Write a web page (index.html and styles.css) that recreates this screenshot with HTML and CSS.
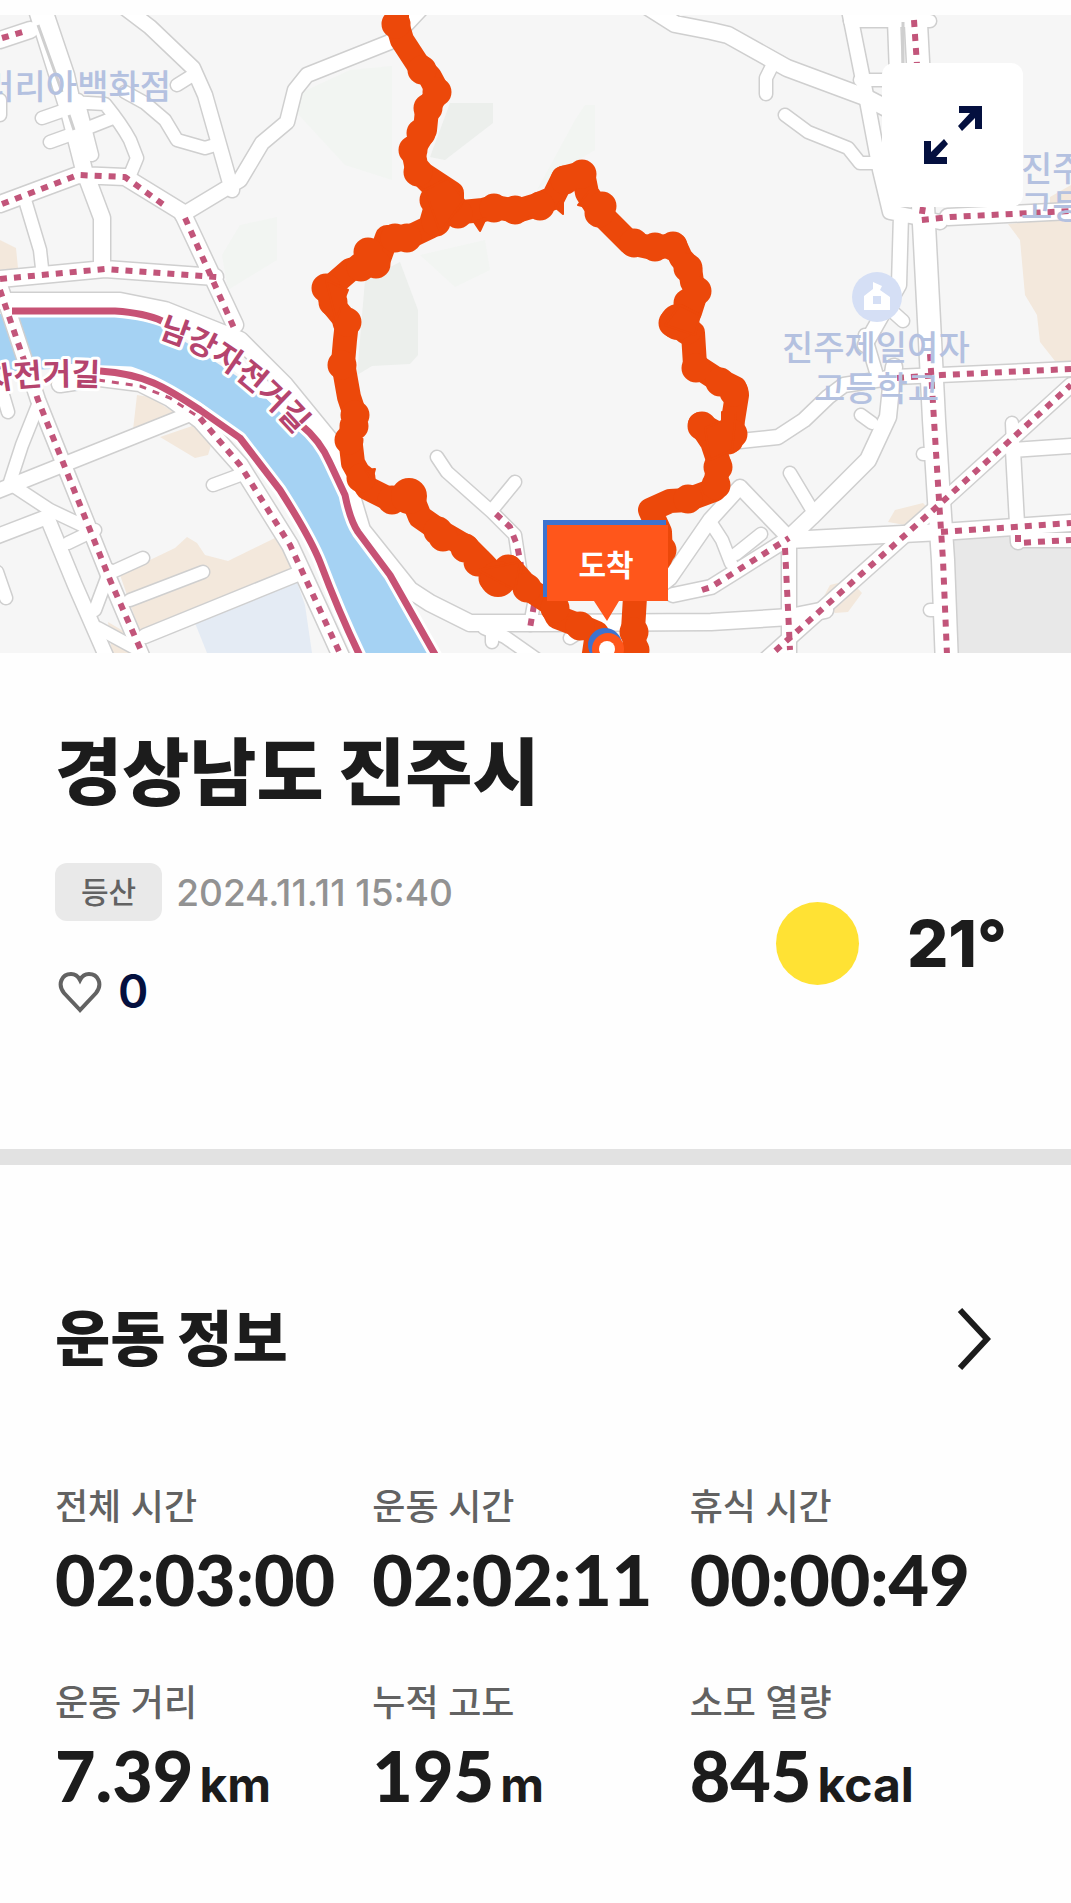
FILE: index.html
```html
<!DOCTYPE html>
<html lang="ko">
<head>
<meta charset="utf-8">
<meta name="viewport" content="width=device-width, initial-scale=1">
<title>경상남도 진주시</title>
<link rel="stylesheet" href="styles.css">
</head>
<body>
<main class="page">
  <section class="map" aria-label="운동 경로 지도">
    <svg class="map-canvas" viewBox="0 15 1071 638" role="img" aria-label="경로 지도">
      <defs>
        <g id="roads">
          <path class="r16" d="M37 10L70 115L84 170L102 218V268M44 10L66 75L80 140M0 40L30 30M0 204L78 175L125 177L182 212L235 325M0 279L105 269L215 277"/>
          <path class="r14" d="M125 8L150 27L193 68L205 95L232 190M182 215L240 180L262 143L287 122L295 90L307 75L390 42L420 10"/>
          <path class="r12" d="M193 75L177 85M70 102L105 104Q122 125 130 140L137 158L130 175M125 92L145 103L165 120L177 140L205 148L215 145M42 118L65 110M50 142L75 133L113 118M78 100L92 155M25 200L40 250L42 268M0 100V115"/>
          <path class="r16" d="M-5 301H120L165 310L240 340L285 385L330 440L350 490L362 530L410 590L430 603L470 623H540L711 622L790 617L825 610"/>
          <path class="r14" d="M0 285L38 400L70 480L110 580L146 665"/>
          <path class="r16" d="M60 384L100 378L140 383L170 398L200 420L240 465L265 505L290 545L320 610L345 665"/>
          <path class="r14" d="M-5 492L15 484L190 414M-5 537L47 517L75 585L110 665M145 636L300 573"/>
          <path class="r12" d="M38 405L22 445L10 482M0 385L8 412M15 487L50 510L88 528M68 543L95 530M95 610L110 570M110 573L143 558M130 600L203 572M213 485L240 475M-3 572L6 598M98 628L135 648"/>
          <path class="r12" d="M437 457L447 472L492 512L515 535L521 575L535 598L530 625M492 510L515 482M484 628L505 637L545 665M492 628V642M570 638L590 625"/>
          <path class="r14" d="M655 590L670 578L710 520L740 487L789 538M673 595L711 587L735 572L789 538L789 665"/>
          <path class="r12" d="M711 523L722 540L731 563M736 554L761 534M811 508L790 473M872 423L861 415M923 454H935M930 610H940M772 66L766 78V94M865 335L876 372M893 312L903 321M1012 423L1013 445M894 367L892 387"/>
          <path class="r16" d="M789 538L811 517L868 460L888 417L891 387L894 367M789 540L941 532L1071 523"/>
          <path class="r14" d="M740 441L778 437L804 420L828 397L844 385L895 377L1071 369M765 660L941 503L1071 385M1013 450L1018 542M1013 450L1071 446M1018 540H1071"/>
          <path class="r16" d="M645 5L675 24L711 31L728 35L787 68L865 97L890 110M948 217L1071 211"/>
          <path class="r12" d="M785 115L808 132L848 148L860 163L882 163M850 21H930M894 20L896 75M860 80H905"/>
          <path class="r14" d="M848 5L865 90L880 170L890 212L940 222M901 215L899 285L865 345"/>
          <path class="r22" d="M915 5L919 80L923 205L930 340L934 420L939 500L943 560L947 665"/>
        </g>
      </defs>
      <rect class="land" y="15" width="1071" height="638"/>
      <path class="wood faint" d="M285 100L350 70L392 66V180L345 165ZM222 255L240 225L277 217V260L228 290ZM537 190L575 120L585 105H595V150L570 165ZM420 255L485 240L490 270L455 287Z"/>
      <path class="wood" d="M430 157L445 160L493 123V103H450ZM365 280L400 262L418 310V355L410 364L372 366L357 375Z"/>
      <path class="sand" d="M0 240L16 248L18 268L0 274ZM137 395L133 430L175 413L150 397ZM160 437L195 458L208 455L212 442L195 425ZM120 575L150 560L175 548L187 537L197 543L205 555L228 561L275 538L293 565L300 575L140 632ZM108 622L130 635V653H112ZM888 522L895 510L923 503L928 508L905 525ZM822 600L830 585L850 580L862 593L848 612L835 613ZM1008 224L1020 240L1025 295L1037 315L1040 342L1055 361H1071V185L1050 197V220Z"/>
      <path class="campus" d="M195 623L297 582L305 605L312 653H207Z"/>
      <path class="block" d="M950 540L1071 533V653H955Z"/>
      <path class="river" d="M0 314H115L160 325L250 385L310 435L345 500L355 530L434 653H362L325 570L290 495L245 437L200 402L150 375L100 366L0 372Z"/>
      <use href="#roads" class="road-edge"/>
      <use href="#roads" class="road-fill"/>
      <path class="lane-gap" d="M38 25L62 92M69 115L74 130M903 22V80"/>
      <path class="bike-halo" d="M12 311H115Q150 314 166 322M166 322C220 345 270 390 300 424Q320 440 330 463L345 495Q350 520 358 532L390 575L437 658M60 370L130 373Q160 383 200 410L240 438L280 490Q310 537 320 562Q340 615 361 658"/>
      <path class="bike" d="M12 311H115Q145 313 162 321M300 424Q320 440 330 463L345 495Q350 520 358 532L390 575L437 658M100 371C145 374 165 387 200 410L240 438L280 490Q310 537 320 562Q340 615 361 658"/>
      <path class="trail-dots" d="M2 38L26 31M2 204L78 175L125 177L168 208M185 218L234 328M0 279L105 269L217 277M0 290L17 340L38 400L70 480L110 580L143 655M496 514L510 527L517 545L521 565M534 605L530 628M702 590L711 587L735 572L789 538M785 548L790 650M897 378L941 375L1071 369M765 660L941 503L1071 385M941 532L1071 523M1018 535V543L1071 540M923 207L921 220L950 217L1071 211M914 20L918 80M930 354L934 420L939 500L943 560L947 655M200 418L240 465L265 505L290 545L320 610L342 658"/>
      <path class="trail-dots thin" d="M98 380L140 386L170 398L200 418"/>

      <circle class="school" cx="877" cy="297" r="25"/>
      <path class="school-glyph" d="M864 296L873 289V282L882 286L880 290L890 297V310H864ZM873 296V304H881V296Z"/>
      <text class="place" x="171" y="99" text-anchor="end">갤러리아백화점</text>
      <text class="place" x="782" y="360">진주제일여자</text>
      <text class="place" x="814" y="401">고등학교</text>
      <text class="place" x="1021" y="181">진주</text>
      <text class="place" x="1021" y="219">고등</text>
      <path id="bank-north" fill="none" d="M158 337C202 351 246 374 314 456"/>
      <path id="bank-south" fill="none" d="M-95 422C-40 390 22 382 100 386"/>
      <text class="path-name"><textPath href="#bank-north">남강자전거길</textPath></text>
      <text class="path-name" text-anchor="end"><textPath href="#bank-south" startOffset="100%">남강자전거길</textPath></text>

      <g class="route">
        <path d="M397 10V23L402 40L417 63L430 77L438 92L433 100L427 110L425 130L413 150L417 170L440 193L434 213L430 227L407 238L387 237L378 262L350 270L327 290L333 305L347 322L345 340L343 363L349 397L355 415L350 437L353 463L367 488L393 501L410 492L420 517L443 533L467 547L483 563L497 578L510 567L530 590L550 603L557 617L583 627L597 633L593 660"/>
        <path d="M417 170L452 193V213L483 210L495 207L517 211L537 205L553 198L563 178L583 173L587 193L600 213L617 230L630 243L653 248L675 245L681 258L690 268L692 282L697 290L690 312L673 325L693 333L695 365L715 378L735 388L737 395L733 420L731 441L700 424L712 442L719 463L714 490L687 500L670 501L650 510L660 532L661 557L635 597L633 630L637 660"/>
        <path class="route-wide" d="M396 24h0M422 70h0M437 92h0M428 108h0M421 133h0M413 150h0M418 172h0M434 200h0M448 196h0M436 222h0M407 238h0M395 238h0M376 264h0M368 252h0M361 267h0M326 288h0M333 302h0M347 322h0M342 365h0M355 415h0M354 426h0M349 440h0M361 478h0M392 500h0M409 495h0M438 531h0M443 537h0M465 548h0M478 562h0M493 578h0M497 577h0M508 569h0M527 588h0M555 608h0M580 626h0M458 214h0M494 208h0M515 210h0M540 206h0M565 180h0M582 174h0M599 213h0M602 206h0M634 243h0M655 247h0M673 246h0M688 268h0M697 291h0M688 303h0M673 323h0M687 330h0M696 368h0M720 382h0M734 392h0M733 434h0M702 426h0M728 440h0M718 467h0M716 485h0M688 499h0M662 550h0M634 632h0M635 650h0"/>
        <path class="route-big" d="M409 496h0M498 579h0M446 198h0M678 322h0"/>
        <path class="route-spurs" d="M474 222L480 231L486 218ZM556 208L563 214V197ZM578 205L590 208L590 190ZM425 190L448 178L464 200L440 232ZM478 570L520 562L515 590ZM365 470L375 469L372 480ZM326 280L336 320L348 290ZM665 325L680 305L700 315L695 335ZM705 428L722 421L722 412H736L732 450L710 460Z"/>
      </g>
      <path class="flag-shadow" d="M543 520H666V530H548V597H543Z"/>
      <path class="flag" d="M547 525H668V601H619L607 621L594 601H547Z"/>
      <text class="flag-text" x="606" y="576" text-anchor="middle">도착</text>
      <circle class="flag-shadow" cx="605" cy="645" r="17"/>
      <circle class="flag" cx="608" cy="649" r="16"/>
      <circle class="pin-eye" cx="607" cy="649" r="8"/>
    </svg>
    <button class="expand" type="button" aria-label="지도 확대">
      <svg viewBox="0 0 60 60" width="60" height="60" aria-hidden="true">
        <path d="M36 1H59V24H52V13L39 26L35 21L47 8H36ZM24 59H1V36H8V47L21 34L25 39L13 52H24Z"/>
      </svg>
    </button>
  </section>

  <section class="summary">
    <h1 class="place-title">경상남도 진주시</h1>
    <div class="summary-row">
      <div class="summary-meta">
        <div class="when"><span class="chip">등산</span><time datetime="2024-11-11T15:40">2024.11.11 15:40</time></div>
        <button class="like" type="button" aria-label="좋아요 0">
          <svg viewBox="0 0 44 44" width="44" height="44" aria-hidden="true">
            <path d="M22 41L6 24C-1 15 4 5 13 5C17 5 20 7 22 11C24 7 27 5 31 5C40 5 45 15 38 24Z"/>
          </svg>
          <span>0</span>
        </button>
      </div>
      <div class="weather"><span class="sun" role="img" aria-label="맑음"></span><span>21°</span></div>
    </div>
  </section>

  <section class="info">
    <div class="info-head">
      <h2>운동 정보</h2>
      <a class="more" href="#stats" aria-label="운동 정보 더보기">
        <svg viewBox="0 0 34 64" width="34" height="64" aria-hidden="true"><path d="M3 3L30 32L3 61"/></svg>
      </a>
    </div>
    <dl class="stats" id="stats">
      <div><dt>전체 시간</dt><dd>02:03:00</dd></div>
      <div><dt>운동 시간</dt><dd>02:02:11</dd></div>
      <div><dt>휴식 시간</dt><dd>00:00:49</dd></div>
      <div><dt>운동 거리</dt><dd>7.39<span class="unit">km</span></dd></div>
      <div><dt>누적 고도</dt><dd>195<span class="unit">m</span></dd></div>
      <div><dt>소모 열량</dt><dd>845<span class="unit">kcal</span></dd></div>
    </dl>
  </section>
</main>
</body>
</html>
```
FILE: styles.css
```css
* { box-sizing: border-box; }

body {
  margin: 0;
  background: #fefefe;
  color: #1c1c1c;
  font-family: Inter, "Noto Sans CJK KR", sans-serif;
}

h1, h2, dl, dd { margin: 0; }

button {
  border: 0;
  padding: 0;
  background: none;
  font: inherit;
  cursor: pointer;
}

.page { padding-top: 15px; }

/* Map */
.map { position: relative; }
.map-canvas { display: block; width: 100%; height: auto; }
.land { fill: #f6f6f6; }
.wood { fill: #ecefec; }
.wood.faint { fill: #f2f5f2; }
.sand { fill: #f3e8dc; }
.campus { fill: #e4ebf4; }
.block { fill: #e8e8e8; }
.river { fill: #a5d2f3; }

.road-edge, .road-fill {
  fill: none;
  stroke-linecap: round;
  stroke-linejoin: round;
}
.road-edge { --edge: 3px; stroke: #cfcfcf; }
.road-fill { --edge: 0px; stroke: #fff; }
.r12 { stroke-width: calc(12px + var(--edge)); }
.r14 { stroke-width: calc(14px + var(--edge)); }
.r16 { stroke-width: calc(16px + var(--edge)); }
.r22 { stroke-width: calc(22px + var(--edge)); }
.lane-gap { fill: none; stroke: #cfcfcf; stroke-width: 3px; }

.bike-halo, .bike, .trail-dots { fill: none; stroke-linejoin: round; }
.bike-halo { stroke: #fff; stroke-width: 13px; }
.bike { stroke: #c75275; stroke-width: 7px; }
.trail-dots { stroke: #c2557a; stroke-width: 6px; stroke-dasharray: 7 7; }
.trail-dots.thin { stroke-width: 3px; }

.school { fill: #d5dff5; }
.school-glyph { fill: #fff; fill-rule: evenodd; }
.place {
  fill: #b4c1e0;
  font: 500 34px "Noto Sans CJK KR", sans-serif;
}
.path-name {
  fill: #b5446e;
  stroke: #fff;
  stroke-width: 6px;
  stroke-linejoin: round;
  paint-order: stroke;
  font: 700 31px "Noto Sans CJK KR", sans-serif;
}

.route { fill: none; stroke: #ec480a; stroke-width: 24px; stroke-linecap: round; stroke-linejoin: round; }
.route-wide { stroke-width: 29px; }
.route-big { stroke-width: 36px; }
.route-spurs { fill: #ec480a; stroke-width: 2px; }
.flag { fill: #ff561b; }
.flag-shadow { fill: #3d73cf; }
.flag-text { fill: #fff; font: 700 30px "Noto Sans CJK KR", sans-serif; }
.pin-eye { fill: #fff; }

.expand {
  position: absolute;
  top: 48px;
  right: 48px;
  display: grid;
  place-items: center;
  width: 141px;
  height: 144px;
  border-radius: 12px;
  background: #fff;
}
.expand svg { fill: #04103f; }

/* Summary */
.summary {
  padding: 72px 64px 126px 55px;
  border-bottom: 16px solid #e2e2e2;
}
.place-title { font-size: 73px; line-height: 96px; font-weight: 900; }
.summary-row {
  display: flex;
  justify-content: space-between;
  align-items: center;
  margin-top: 42px;
}
.summary-meta {
  display: flex;
  flex-direction: column;
  align-items: flex-start;
  gap: 38px;
}
.when {
  display: flex;
  align-items: center;
  gap: 14px;
  color: #929292;
  font-size: 37px;
  font-weight: 500;
}
.chip {
  padding: 0 26px;
  border-radius: 12px;
  background: #e9e9e9;
  color: #626262;
  font-size: 30px;
  line-height: 58px;
}
.like {
  display: flex;
  align-items: center;
  gap: 16px;
  height: 64px;
  padding-left: 3px;
  color: #04103f;
  font-size: 46px;
  font-weight: 600;
}
.like svg { fill: none; stroke: #626262; stroke-width: 4px; }
.weather {
  display: flex;
  align-items: center;
  gap: 48px;
  font-size: 65px;
  font-weight: 800;
}
.sun { width: 83px; height: 83px; border-radius: 50%; background: #ffe234; }

/* Workout info */
.info { padding: 134px 64px 92px 55px; }
.info-head {
  display: flex;
  justify-content: space-between;
  align-items: center;
}
.info-head h2 { font-size: 60px; line-height: 80px; font-weight: 900; }
.more { display: block; padding-right: 16px; }
.more svg { display: block; fill: none; stroke: #1c1c1c; stroke-width: 6px; }
.stats {
  display: grid;
  grid-template-columns: repeat(3, minmax(0, 1fr));
  row-gap: 64px;
  margin-top: 104px;
}
.stats dt { color: #626262; font-size: 36px; line-height: 48px; font-weight: 500; }
.stats dd {
  margin-top: 12px;
  font-family: Lato, sans-serif;
  font-size: 70px;
  line-height: 72px;
  font-weight: 900;
  white-space: nowrap;
}
.unit { margin-left: 6px; font-family: Inter, sans-serif; font-size: 48px; font-weight: 700; line-height: 48px; }
```
